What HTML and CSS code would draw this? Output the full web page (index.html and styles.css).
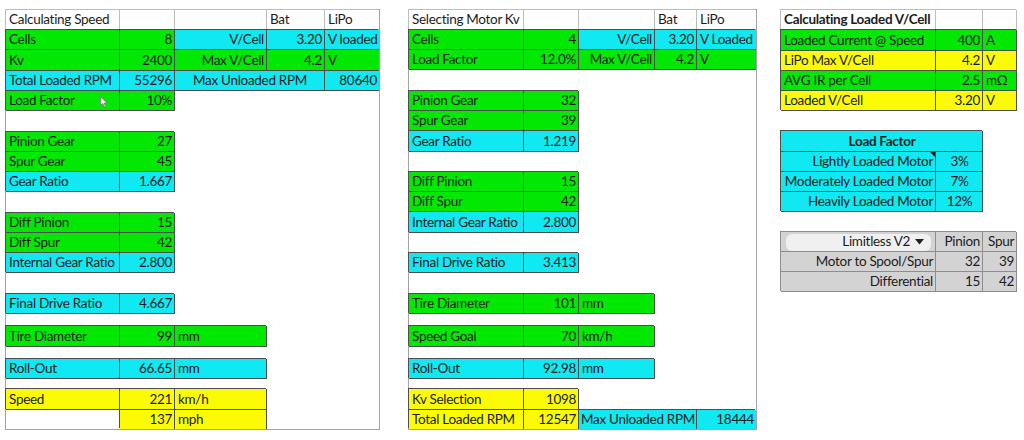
FILE: index.html
```html
<!DOCTYPE html>
<html lang="en">
<head>
<meta charset="utf-8">
<title>Speed Calculator</title>
<link rel="stylesheet" href="styles.css">
</head>
<body>
<div class="sheet">
  <section class="panel left">
    <div class="row h20">
      <div class="c h wa">Calculating Speed</div>
      <div class="c h wb"></div>
      <div class="c h wc"></div>
      <div class="c h wd">Bat</div>
      <div class="c h we e">LiPo</div>
    </div>
    <div class="row h20">
      <div class="c g wa">Cells</div>
      <div class="c g wb r">8</div>
      <div class="c b wc r">V/Cell</div>
      <div class="c b wd r">3.20</div>
      <div class="c b we e">V loaded</div>
    </div>
    <div class="row h21">
      <div class="c g wa">Kv</div>
      <div class="c g wb r">2400</div>
      <div class="c g wc r">Max V/Cell</div>
      <div class="c g wd r">4.2</div>
      <div class="c g we e">V</div>
    </div>
    <div class="row h20">
      <div class="c b wa">Total Loaded RPM</div>
      <div class="c b wb r">55296</div>
      <div class="c b wcd ctr">Max Unloaded RPM</div>
      <div class="c b we e r">80640</div>
    </div>
    <div class="row h20">
      <div class="c g wa cur">Load Factor
        <svg class="cursor" width="8" height="12" viewBox="0 0 8 12"><path d="M0.6 0.6 L0.6 9.4 L2.7 7.4 L4.2 10.9 L5.5 10.3 L4.1 7 L6.9 7 Z" fill="#fff" stroke="#777" stroke-width="0.8"/></svg>
      </div>
      <div class="c g wb r">10%</div>
    </div>
    <div class="row h21"></div>
    <div class="row h20">
      <div class="c g wa">Pinion Gear</div>
      <div class="c g wb r">27</div>
    </div>
    <div class="row h20">
      <div class="c g wa">Spur Gear</div>
      <div class="c g wb r">45</div>
    </div>
    <div class="row h20">
      <div class="c b wa">Gear Ratio</div>
      <div class="c b wb r">1.667</div>
    </div>
    <div class="row h21"></div>
    <div class="row h20">
      <div class="c g wa">Diff Pinion</div>
      <div class="c g wb r">15</div>
    </div>
    <div class="row h20">
      <div class="c g wa">Diff Spur</div>
      <div class="c g wb r">42</div>
    </div>
    <div class="row h20">
      <div class="c b wa">Internal Gear Ratio</div>
      <div class="c b wb r">2.800</div>
    </div>
    <div class="row h21"></div>
    <div class="row h20">
      <div class="c b wa">Final Drive Ratio</div>
      <div class="c b wb r">4.667</div>
    </div>
    <div class="row h12"></div>
    <div class="row h21">
      <div class="c g wa">Tire Diameter</div>
      <div class="c g wb r">99</div>
      <div class="c g wc">mm</div>
    </div>
    <div class="row h12"></div>
    <div class="row h20">
      <div class="c b wa">Roll-Out</div>
      <div class="c b wb r">66.65</div>
      <div class="c b wc">mm</div>
    </div>
    <div class="row h10"></div>
    <div class="row h21">
      <div class="c y wa">Speed</div>
      <div class="c y wb r">221</div>
      <div class="c y wc">km/h</div>
    </div>
    <div class="row h19 last">
      <div class="void wa"></div>
      <div class="c y wb r">137</div>
      <div class="c y wc">mph</div>
    </div>
  </section>

  <section class="panel mid">
    <div class="row h20">
      <div class="c h wa">Selecting Motor Kv</div>
      <div class="c h wb"></div>
      <div class="c h wc"></div>
      <div class="c h wd">Bat</div>
      <div class="c h we e">LiPo</div>
    </div>
    <div class="row h20">
      <div class="c g wa">Cells</div>
      <div class="c g wb r">4</div>
      <div class="c b wc r">V/Cell</div>
      <div class="c b wd r">3.20</div>
      <div class="c b we e">V Loaded</div>
    </div>
    <div class="row h20">
      <div class="c g wa">Load Factor</div>
      <div class="c g wb r">12.0%</div>
      <div class="c g wc r">Max V/Cell</div>
      <div class="c g wd r">4.2</div>
      <div class="c g we e">V</div>
    </div>
    <div class="row h21"></div>
    <div class="row h20">
      <div class="c g wa">Pinion Gear</div>
      <div class="c g wb r">32</div>
    </div>
    <div class="row h20">
      <div class="c g wa">Spur Gear</div>
      <div class="c g wb r">39</div>
    </div>
    <div class="row h21">
      <div class="c b wa">Gear Ratio</div>
      <div class="c b wb r">1.219</div>
    </div>
    <div class="row h20"></div>
    <div class="row h20">
      <div class="c g wa">Diff Pinion</div>
      <div class="c g wb r">15</div>
    </div>
    <div class="row h20">
      <div class="c g wa">Diff Spur</div>
      <div class="c g wb r">42</div>
    </div>
    <div class="row h21">
      <div class="c b wa">Internal Gear Ratio</div>
      <div class="c b wb r">2.800</div>
    </div>
    <div class="row h20"></div>
    <div class="row h20">
      <div class="c b wa">Final Drive Ratio</div>
      <div class="c b wb r">3.413</div>
    </div>
    <div class="row h21"></div>
    <div class="row h20">
      <div class="c g wa">Tire Diameter</div>
      <div class="c g wb r">101</div>
      <div class="c g wc">mm</div>
    </div>
    <div class="row h12"></div>
    <div class="row h21">
      <div class="c g wa">Speed Goal</div>
      <div class="c g wb r">70</div>
      <div class="c g wc">km/h</div>
    </div>
    <div class="row h12"></div>
    <div class="row h20">
      <div class="c b wa">Roll-Out</div>
      <div class="c b wb r">92.98</div>
      <div class="c b wc">mm</div>
    </div>
    <div class="row h10"></div>
    <div class="row h21">
      <div class="c y wa">Kv Selection</div>
      <div class="c y wb r">1098</div>
    </div>
    <div class="row h19 last">
      <div class="c y wa">Total Loaded RPM</div>
      <div class="c y wb r">12547</div>
      <div class="c b wcd ctr">Max Unloaded RPM</div>
      <div class="c b we e r">18444</div>
    </div>
  </section>

  <aside class="side">
    <div class="tbl">
      <div class="row h20">
        <div class="c h sa bold">Calculating Loaded V/Cell</div>
        <div class="c h sb"></div>
        <div class="c h sc"></div>
      </div>
      <div class="row h21">
        <div class="c g sa">Loaded Current @ Speed</div>
        <div class="c g sb r">400</div>
        <div class="c g sc">A</div>
      </div>
      <div class="row h20">
        <div class="c y sa">LiPo Max V/Cell</div>
        <div class="c y sb r">4.2</div>
        <div class="c y sc">V</div>
      </div>
      <div class="row h20">
        <div class="c g sa">AVG IR per Cell</div>
        <div class="c g sb r">2.5</div>
        <div class="c g sc">mΩ</div>
      </div>
      <div class="row h20">
        <div class="c y sa">Loaded V/Cell</div>
        <div class="c y sb r">3.20</div>
        <div class="c y sc">V</div>
      </div>
    </div>

    <div class="tbl">
      <div class="row h21">
        <div class="c b sab ctr bold">Load Factor</div>
      </div>
      <div class="row h20">
        <div class="c b sa r cm">Lightly Loaded Motor</div>
        <div class="c b sb ctr">3%</div>
      </div>
      <div class="row h20">
        <div class="c b sa r">Moderately Loaded Motor</div>
        <div class="c b sb ctr">7%</div>
      </div>
      <div class="row h20">
        <div class="c b sa r">Heavily Loaded Motor</div>
        <div class="c b sb ctr">12%</div>
      </div>
    </div>

    <div class="tbl">
      <div class="row h20">
        <div class="c gy sa">
          <div class="dd">Limitless V2 <svg width="9" height="6" viewBox="0 0 9 6"><path d="M0 0 H9 L4.5 5.5 Z" fill="#222"/></svg></div>
        </div>
        <div class="c gy sb r">Pinion</div>
        <div class="c gy sc r">Spur</div>
      </div>
      <div class="row h20">
        <div class="c gy sa r">Motor to Spool/Spur</div>
        <div class="c gy sb r">32</div>
        <div class="c gy sc r">39</div>
      </div>
      <div class="row h20">
        <div class="c gy sa r">Differential</div>
        <div class="c gy sb r">15</div>
        <div class="c gy sc r">42</div>
      </div>
    </div>
  </aside>
</div>
</body>
</html>
```

FILE: styles.css
```css
* { box-sizing: border-box; margin: 0; padding: 0; }

html, body { background: #ffffff; }

body {
  font-family: Lato, "Open Sans", "Liberation Sans", sans-serif;
  font-size: 13.5px;
  letter-spacing: -0.3px;
  color: #1c1c1c;
}

.sheet {
  display: flex;
  align-items: flex-start;
  padding: 9px 0 0 5px;
}

.panel {
  display: flex;
  flex-direction: column;
  border: 1px solid #a3a3a3;
}

.left { width: 375px; }
.mid { width: 349px; margin-left: 28px; }

.side {
  display: flex;
  flex-direction: column;
  gap: 20px;
  margin-left: 24px;
  padding-top: 1px;
}

.tbl { display: flex; flex-direction: column; }

.row { display: flex; flex: none; }
.h10 { height: 10px; }
.h12 { height: 12px; }
.h19 { height: 19px; }
.h20 { height: 20px; }
.h21 { height: 21px; }

.c {
  flex: none;
  display: flex;
  align-items: center;
  padding: 1px 2px 0 3px;
  white-space: nowrap;
  line-height: 1;
  border-right: 1px solid #4e4e4e;
  border-bottom: 1px solid #4e4e4e;
  box-shadow: -1px -1px 0 #4e4e4e;
}

.void { flex: none; }

.r { justify-content: flex-end; padding-right: 2px; }
.ctr { justify-content: center; }
.e { border-right: 0; }
.last .c { border-bottom: 0; }
.bold { font-weight: 700; }

/* fills */
.h {
  background: #ffffff;
  border-color: #bdbdbd;
  box-shadow: -1px -1px 0 #bdbdbd;
}
.g { background: #03e803; }
.b { background: #10e8f2; }
.y { background: #fbfb06; }
.gy {
  background: #d3d3d3;
  border-color: #8d8d8d;
  box-shadow: -1px -1px 0 #8d8d8d;
}

/* left panel columns */
.left .wa { width: 114px; }
.left .wb { width: 55px; }
.left .wc { width: 92px; }
.left .wd { width: 58px; }
.left .we { width: 54px; }
.left .wcd { width: 150px; }

/* middle panel columns */
.mid .wa { width: 115px; }
.mid .wb { width: 55px; }
.mid .wc { width: 76px; }
.mid .wd { width: 42px; }
.mid .we { width: 59px; }
.mid .wcd { width: 118px; }

/* side tables columns */
.sa { width: 155px; }
.sb { width: 47px; }
.sc { width: 34px; }
.sab { width: 202px; }

/* overlays */
.cur { position: relative; }
.cursor { position: absolute; left: 94px; top: 5px; }

.cm { position: relative; }
.cm::after {
  content: "";
  position: absolute;
  top: 0;
  right: 0;
  border-style: solid;
  border-width: 0 5px 5px 0;
  border-color: transparent #1a1a1a transparent transparent;
}

.dd {
  display: flex;
  align-items: center;
  justify-content: flex-end;
  gap: 5px;
  width: 145px;
  height: 17px;
  margin-left: 2px;
  padding-right: 7px;
  background: #f0f0f0;
  border-radius: 6px;
}
```
